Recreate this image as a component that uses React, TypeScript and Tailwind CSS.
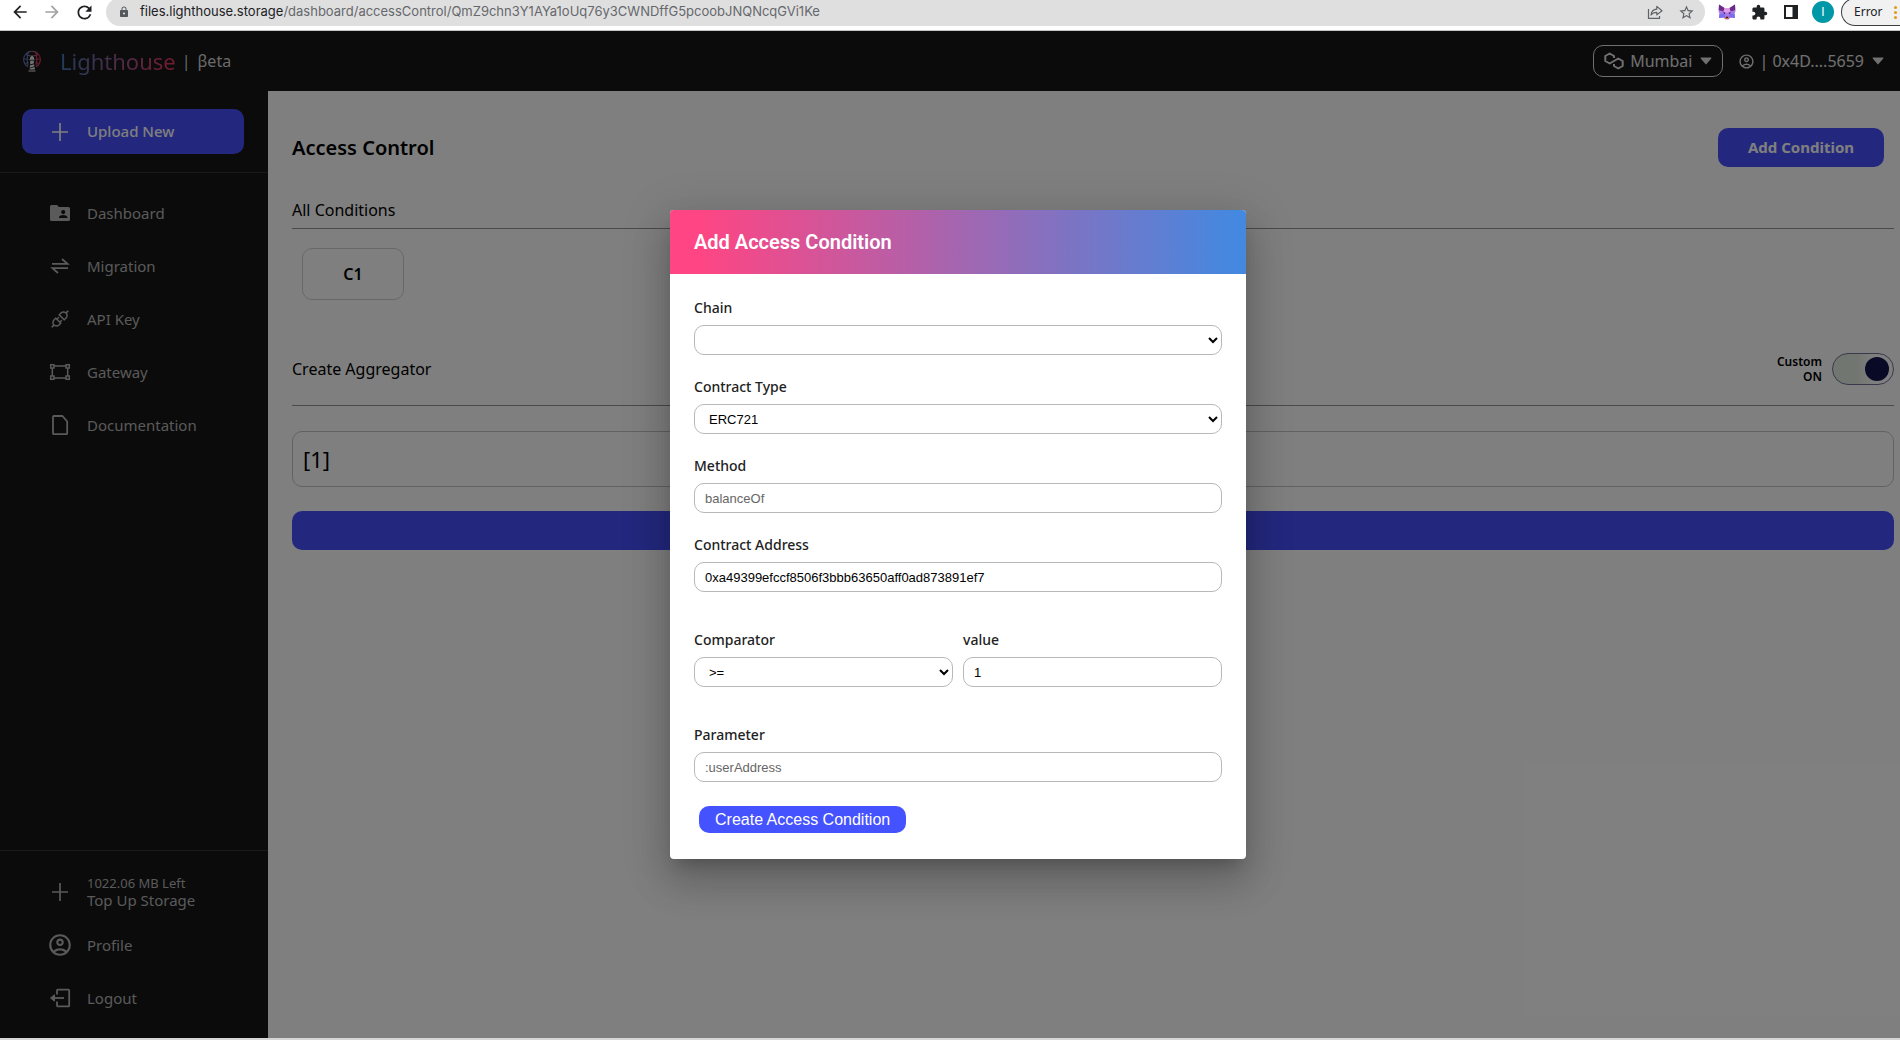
import React, { useState } from "react";
import { MdArrowBack, MdArrowForward, MdExtension, MdLock, MdOutlineAccountCircle, MdRefresh, MdStarBorder } from "react-icons/md";
import { AiOutlineApi } from "react-icons/ai";

function ShareIcon() {
  return (
    <svg viewBox="0 0 16 16" className="size-4" fill="none" stroke="currentColor" strokeWidth="1.2">
      <path d="M1.500 5v9.400h11V12" />
      <path d="M4 11C4.500 7.200 6.500 5.400 9.800 5.200V2.400L15 6.700l-5.200 4.200V8.300C7.200 8.300 5.400 9 4 11Z" strokeLinejoin="round" />
    </svg>
  );
}

function FoxIcon() {
  return (
    <svg viewBox="0 0 18 16" className="h-4 w-[18px]">
      <path d="M1 .5 6.500 4h5L17 .5 17.500 7l-1 3 .5 4-4.500-.5L10.500 15.500h-3L5.500 13.500 1 14l.5-4-1-3Z" fill="#a77be8" />
      <path d="M1 .5 6.500 4 5.500 7.500.8 6ZM17 .5 11.500 4l1 3.500L17.200 6Z" fill="#6a2a86" />
      <path d="M6.500 4h5l1 3.500L9 9 5.500 7.500Z" fill="#e09be8" />
      <path d="M1.500 10 6 9.500l1.500 4L5.500 13.500 1 14ZM16.500 10 12 9.500l-1.500 4 2 0 4.500.5Z" fill="#7d6bf0" />
      <path d="M5 8.300l2.400.5-.8 1.400ZM13 8.300l-2.400.5.8 1.400Z" fill="#32205e" />
      <path d="M7.300 12.700h3.400l.2 2.300H7.100Z" fill="#d9662e" />
      <path d="M8 12.700h2v1.200H8Z" fill="#2b1b33" />
    </svg>
  );
}

function PanelIcon() {
  return (
    <svg viewBox="0 0 14 14" className="size-3.5 text-[#202124]">
      <path d="M0 0h14v14H0ZM2 2v10h6.500V2Z" fill="currentColor" fillRule="evenodd" />
    </svg>
  );
}

function LighthouseLogo() {
  return (
    <svg viewBox="0 0 18 22" className="h-[22px] w-[18px]" fill="none">
      <defs>
        <linearGradient id="globe" x1="0" y1="0" x2="1" y2="0">
          <stop offset="0" stopColor="#5a78b8" />
          <stop offset="0.5" stopColor="#8e6690" />
          <stop offset="1" stopColor="#d8345c" />
        </linearGradient>
      </defs>
      <g stroke="url(#globe)" strokeWidth="1.1">
        <path d="M5 16.800A8.300 8.300 0 1 1 13 16.800" />
        <path d="M1 9h4.500M12.500 9H17M2.500 4.500c4 1.800 9 1.800 13 0M2.500 13.500l3-1M15.500 13.500l-3-1" />
        <path d="M6 1.400C4 4 3.700 11 5 15.500M12 1.400C14 4 14.300 11 13 15.500" />
      </g>
      <path d="M7 7.500 9 5.500l2 2V9H7ZM6.300 9.300h5.400v1H6.300Z" fill="#e8e8e8" />
      <path d="M7.300 10.800h3.400l.3 2.500-3.900 1.200ZM6.900 15.500l4.200-1.300.3 2-4.700 1.500ZM6.600 18.500l5-1.600.3 2.600H6.500Z" fill="#e8e8e8" />
      <path d="M5.500 20.500h7v1h-7Z" fill="#e8e8e8" />
    </svg>
  );
}

function PolygonIcon() {
  return (
    <svg viewBox="0 0 20 18" className="h-[18px] w-5" fill="none" stroke="currentColor" strokeWidth="2" strokeLinejoin="round">
      <path d="M10 6V4L5.700 1.500 1.300 4V9L5.700 11.500 14.300 6.500 18.700 9V14L14.300 16.500 10 14V12" />
    </svg>
  );
}

function Caret() {
  return (
    <svg viewBox="0 0 12 8" className="h-2 w-3" fill="currentColor">
      <path d="M1.200.5h9.600a.6.6 0 0 1 .5 1L6.500 7a.6.6 0 0 1-1 0L.7 1.500a.6.6 0 0 1 .5-1Z" />
    </svg>
  );
}

function PlusIcon() {
  return (
    <svg viewBox="0 0 22 22" className="size-[22px]" stroke="currentColor" strokeWidth="1.700">
      <path d="M11 2v18M3 11h16" />
    </svg>
  );
}

function FolderIcon() {
  return (
    <svg viewBox="0 0 22 22" className="size-[22px]" fill="currentColor">
      <path
        fillRule="evenodd"
        d="M2.500 3H8l2 2h9.500A1.500 1.500 0 0 1 21 6.500v11a1.500 1.500 0 0 1-1.500 1.500h-17A1.500 1.500 0 0 1 1 17.500v-13A1.500 1.500 0 0 1 2.500 3Zm11.700 5a2.100 2.100 0 1 0 0 4.200 2.100 2.100 0 0 0 0-4.200Zm-4.200 8h8.400v-.8c0-1.500-2.800-2.200-4.200-2.200s-4.200.7-4.200 2.200Z"
      />
    </svg>
  );
}

function MigrationIcon() {
  return (
    <svg viewBox="0 0 22 22" className="size-[22px]" fill="none" stroke="currentColor" strokeWidth="1.800">
      <path d="M3 8.800h15.500L13 4M19 13.200H3.500L9 18" />
    </svg>
  );
}

function GatewayIcon() {
  return (
    <svg viewBox="0 0 22 22" className="size-[22px]" fill="none" stroke="currentColor" strokeWidth="1.500">
      <path d="M1.700 3.700h3.200v3.200H1.700ZM17.100 3.700h3.200v3.200h-3.200ZM1.700 15.100h3.200v3.200H1.700ZM17.100 15.100h3.200v3.200h-3.200Z" />
      <path d="M5 5h12M5 17h12M3.300 7v8M18.700 7v8" />
    </svg>
  );
}

function FileIcon() {
  return (
    <svg viewBox="0 0 22 22" className="size-[22px]" fill="none" stroke="currentColor" strokeWidth="1.800" strokeLinejoin="round">
      <path d="M5 2h8.500L18.200 7.500v11.700a1 1 0 0 1-1 1H5a1 1 0 0 1-1-1V3a1 1 0 0 1 1-1Z" />
    </svg>
  );
}

function LogoutIcon() {
  return (
    <svg viewBox="0 0 22 22" className="size-[22px]" fill="none" stroke="currentColor" strokeWidth="1.800" strokeLinejoin="round">
      <path d="M8 7.500V3.500a.8.8 0 0 1 .8-.8h10.600a.8.8 0 0 1 .8.8v15a.8.8 0 0 1-.8.8H8.800a.8.8 0 0 1-.8-.8v-4" />
      <path d="M4 11h11" />
      <path d="M1.500 11l4-3.200v6.400Z" fill="currentColor" strokeWidth="1" />
    </svg>
  );
}

const mainLinks = [
  { label: "Dashboard", icon: <FolderIcon /> },
  { label: "Migration", icon: <MigrationIcon /> },
  { label: "API Key", icon: <AiOutlineApi size={22} /> },
  { label: "Gateway", icon: <GatewayIcon /> },
  { label: "Documentation", icon: <FileIcon /> },
];

function SideLink({ icon, children }: { icon: React.ReactNode; children: React.ReactNode }) {
  return (
    <a href="#" className="flex h-[53px] items-center pl-[47px] text-[15px] leading-[18px] text-[#b4b4b4]">
      <span className="mr-3.5 flex w-[26px] justify-center">{icon}</span>
      <span>{children}</span>
    </a>
  );
}

function BrowserBar() {
  return (
    <div className="flex h-[31px] items-start overflow-hidden border-b border-[#c4c4c4] bg-white text-[#202124]">
      <div className="flex h-6 w-[106px] shrink-0 items-center gap-3 pl-2.5">
        <button aria-label="Back"><MdArrowBack size={20} /></button>
        <button aria-label="Forward" className="text-[#a3a3a3]"><MdArrowForward size={20} /></button>
        <button aria-label="Reload"><MdRefresh size={21} /></button>
      </div>
      <div className="-mt-0.5 flex h-7 flex-1 items-center rounded-full bg-[#dfdfdf] pr-2.5 pl-3 font-['Inter'] text-[13px]">
        <MdLock size={12} className="mr-2.5 text-[#55585c]" />
        <span className="flex-1 whitespace-nowrap">
          files.lighthouse.storage
          <span className="text-[#65686c]">/dashboard/accessControl/QmZ9chn3Y1AYa1oUq76y3CWNDffG5pcoobJNQNcqGVi1Ke</span>
        </span>
        <button aria-label="Share" className="mr-[15px] text-[#5f6368]"><ShareIcon /></button>
        <button aria-label="Bookmark" className="text-[#5f6368]"><MdStarBorder size={17} /></button>
      </div>
      <div className="flex h-6 shrink-0 items-center pl-[13px]">
        <button aria-label="Wallet" className="mr-[15px]"><FoxIcon /></button>
        <button aria-label="Extensions" className="mr-4"><MdExtension size={17} /></button>
        <button aria-label="Side panel" className="mr-3.5"><PanelIcon /></button>
        <button aria-label="Account" className="mr-[7px] flex size-[22px] items-center justify-center rounded-full bg-[#0097a7] font-['Roboto'] text-xs text-white">
          I
        </button>
      </div>
      <button className="-mt-0.5 flex h-7 w-[59px] shrink-0 items-center justify-between overflow-hidden rounded-l-full border border-r-0 border-[#3c4043] bg-[#f1f1f1] pl-3 font-['Noto_Sans'] text-xs">
        Error
        <span className="flex w-1.5 flex-col gap-0.5">
          <span className="size-[3px] rounded-full bg-[#e29a1c]" />
          <span className="size-[3px] rounded-full bg-[#e29a1c]" />
          <span className="size-[3px] rounded-full bg-[#e29a1c]" />
        </span>
      </button>
    </div>
  );
}

function TopBar() {
  return (
    <header className="flex h-[60px] items-center justify-between bg-[#161616] pr-4 pl-[23px] text-[#d4d4d4]">
      <div className="flex items-center">
        <LighthouseLogo />
        <span className="ml-[19px] bg-linear-to-r/srgb from-[#4478b8] to-[#e8365f] bg-clip-text text-[22px] leading-7 text-transparent">
          Lighthouse
        </span>
        <span className="ml-1.5 flex gap-[7px] text-base"><span>|</span><span>βeta</span></span>
      </div>
      <div className="flex items-center gap-[15px] text-base text-[#e0e0e0]">
        <button className="flex h-8 items-center rounded-[10px] border border-[#e0e0e0] px-2.5">
          <PolygonIcon />
          <span className="mr-2 ml-1.5">Mumbai</span>
          <Caret />
        </button>
        <button className="flex items-center">
          <MdOutlineAccountCircle size={17} />
          <span className="mr-2 ml-1">| 0x4D....5659</span>
          <Caret />
        </button>
      </div>
    </header>
  );
}

function SideBar() {
  return (
    <nav className="flex w-[268px] shrink-0 flex-col justify-between bg-[#161616]">
      <div>
        <div className="border-b border-[#343434] pt-[18px] pr-6 pb-[18px] pl-[22px]">
          <button className="flex h-[45px] w-full items-center rounded-[10px] bg-[#4650fc] pl-[25px] text-[15px] font-medium text-white">
            <span className="mr-3.5 flex w-[26px] justify-center"><PlusIcon /></span>
            Upload New
          </button>
        </div>
        <div className="pt-[13px]">
          {mainLinks.map((l) => (
            <SideLink key={l.label} icon={l.icon}>{l.label}</SideLink>
          ))}
        </div>
      </div>
      <div className="border-t border-[#343434] pt-[14px] pb-[14px]">
        <SideLink icon={<PlusIcon />}>
          <span className="block text-[13px] leading-4">1022.06 MB Left</span>
          Top Up Storage
        </SideLink>
        <SideLink icon={<MdOutlineAccountCircle size={26} />}>Profile</SideLink>
        <SideLink icon={<LogoutIcon />}>Logout</SideLink>
      </div>
    </nav>
  );
}

function Content() {
  const [custom, setCustom] = useState(true);
  return (
    <main className="flex-1 bg-white pr-1.5 pl-6 text-black">
      <div className="flex items-center justify-between pt-[37px] pr-2.5">
        <h1 className="text-xl font-semibold">Access Control</h1>
        <button className="h-[39px] w-[166px] rounded-[10px] bg-[#4650fc] text-[15px] font-bold text-white">Add Condition</button>
      </div>
      <h2 className="mt-[31px] border-b border-[#949494] pb-1.5 text-base">All Conditions</h2>
      <div className="mt-[19px] ml-2.5 flex">
        <button className="h-[52px] w-[102px] rounded-[10px] border border-[#d0d0d0] text-base font-semibold">C1</button>
      </div>
      <div className="mt-[53px] flex items-center justify-between border-b border-[#949494] pb-5">
        <h2 className="text-base">Create Aggregator</h2>
        <label className="flex items-center gap-2.5 text-right text-xs leading-[15px] font-semibold">
          <span>Custom<br />ON</span>
          <input type="checkbox" role="switch" checked={custom} onChange={(e) => setCustom(e.target.checked)} className="peer sr-only" />
          <span className="flex h-8 w-[62px] items-center justify-start rounded-full border border-[#707498] bg-linear-to-r from-[#e4ece2] from-40% to-white to-70% px-1 peer-checked:justify-end">
            <span className="size-6 rounded-full bg-[#12144a]" />
          </span>
        </label>
      </div>
      <input
        aria-label="Aggregator"
        defaultValue="[1]"
        className="mt-[25px] block h-14 w-full rounded-[10px] border border-[#c4c4c4] px-2.5 text-[22px]"
      />
      <button aria-label="Submit" className="mt-6 block h-[39px] w-full rounded-[10px] bg-[#4650fc]" />
    </main>
  );
}

const control =
  "block h-[30px] w-full rounded-[10px] border border-[#b8b8b8] bg-white font-['Liberation_Sans',sans-serif] text-[13px] text-black px-2.5 placeholder:text-[#666]";

function Field({ id, label, children }: { id: string; label: string; children: React.ReactNode }) {
  return (
    <div>
      <label htmlFor={id} className="mb-[7px] block text-sm leading-5 font-medium text-[#222]">{label}</label>
      {children}
    </div>
  );
}

function ConditionDialog() {
  return (
    <div
      role="dialog"
      aria-labelledby="dialog-title"
      className="w-[576px] overflow-hidden rounded bg-white shadow-[0_11px_15px_-7px_rgba(0,0,0,0.2),0_24px_38px_3px_rgba(0,0,0,0.14),0_9px_46px_8px_rgba(0,0,0,0.12)]"
    >
      <h2 id="dialog-title" className="bg-linear-to-r/srgb from-[#ff4583] from-5% to-[#4488e0] to-98% px-6 py-4 font-['Roboto',sans-serif] text-xl leading-8 font-semibold text-white">
        Add Access Condition
      </h2>
      <form className="px-6 pt-6 pb-[26px]" onSubmit={(e) => e.preventDefault()}>
        <div className="flex flex-col gap-[22px]">
          <Field id="chain" label="Chain">
            <select id="chain" className={control}><option></option></select>
          </Field>
          <Field id="type" label="Contract Type">
            <select id="type" className={control}><option>ERC721</option></select>
          </Field>
          <Field id="method" label="Method">
            <input id="method" placeholder="balanceOf" className={control} />
          </Field>
          <Field id="address" label="Contract Address">
            <input id="address" defaultValue="0xa49399efccf8506f3bbb63650aff0ad873891ef7" className={control} />
          </Field>
        </div>
        <div className="my-[38px] grid grid-cols-2 gap-2.5">
          <Field id="comparator" label="Comparator">
            <select id="comparator" className={control}><option>&gt;=</option></select>
          </Field>
          <Field id="value" label="value">
            <input id="value" defaultValue="1" className={control} />
          </Field>
        </div>
        <Field id="parameter" label="Parameter">
          <input id="parameter" placeholder=":userAddress" className={control} />
        </Field>
        <button className="mt-6 ml-[5px] block h-[27px] rounded-[10px] bg-[#4552ff] px-4 font-['Liberation_Sans',sans-serif] text-base leading-[27px] text-white">
          Create Access Condition
        </button>
      </form>
    </div>
  );
}

export default function App() {
  return (
    <div className="flex min-h-screen flex-col font-['Noto_Sans',sans-serif]">
      <BrowserBar />
      <div className="relative flex flex-1 flex-col">
        <TopBar />
        <div className="flex flex-1">
          <SideBar />
          <Content />
        </div>
        <div className="absolute inset-0 flex items-center justify-center bg-black/50 pl-4">
          <ConditionDialog />
        </div>
      </div>
      <div className="h-0.5 bg-[#d6d6d6]" />
    </div>
  );
}
